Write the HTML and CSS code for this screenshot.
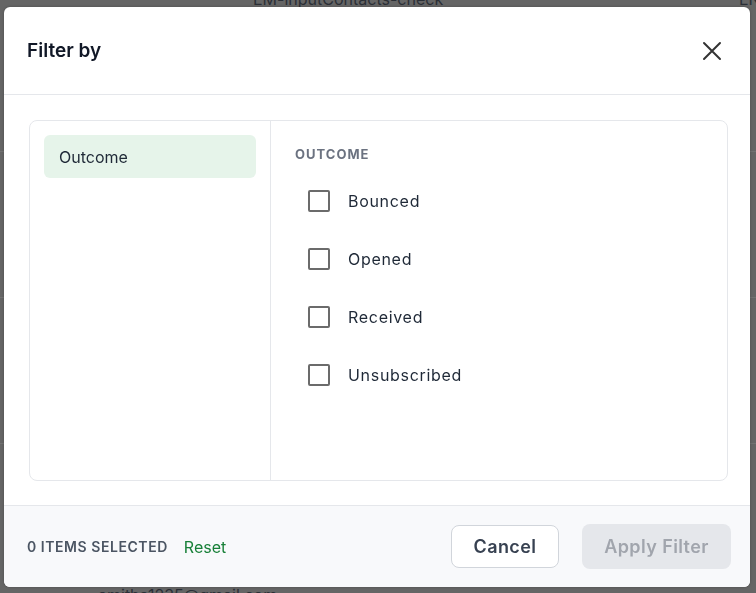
FILE: index.html
```html
<!DOCTYPE html>
<html lang="en">
<head>
    <meta charset="UTF-8">
    <meta name="viewport" content="width=device-width, initial-scale=1.0">
    <title>Filter by</title>
    <link rel="stylesheet" href="styles.css">
</head>
<body>

    <div class="page">
        <div class="page-top">
            <span class="page-title">EM-inputContacts-check</span>
            <span class="page-lang">EN</span>
        </div>
        <div class="page-rows">
            <div class="page-row"></div>
            <div class="page-row"></div>
            <div class="page-row"></div>
        </div>
        <div class="page-email">amitha1235@qmail.com</div>
    </div>

    <div class="modal">
        <header class="modal-header">
            <h1>Filter by</h1>
            <button class="close-btn" aria-label="Close">
                <svg width="24" height="24" viewBox="0 0 24 24">
                    <path d="M4 4 L20 20 M20 4 L4 20" stroke="#333" stroke-width="2" fill="none" stroke-linecap="round"/>
                </svg>
            </button>
        </header>

        <section class="modal-body">
            <div class="filter-panel">
                <div class="filter-groups">
                    <div class="group active">Outcome</div>
                </div>
                <div class="filter-options">
                    <div class="options-title">OUTCOME</div>
                    <label class="option"><span class="checkbox"></span>Bounced</label>
                    <label class="option"><span class="checkbox"></span>Opened</label>
                    <label class="option"><span class="checkbox"></span>Received</label>
                    <label class="option"><span class="checkbox"></span>Unsubscribed</label>
                </div>
            </div>
        </section>

        <footer class="modal-footer">
            <div class="selected">
                <span class="count">0 ITEMS SELECTED</span>
                <a class="reset" href="#">Reset</a>
            </div>
            <div class="actions">
                <button class="btn-cancel">Cancel</button>
                <button class="btn-apply" disabled>Apply Filter</button>
            </div>
        </footer>
    </div>

</body>
</html>
```

FILE: styles.css
```css
body {
    margin: 0;
    padding: 0;
    font-family: Inter, "Liberation Sans", Arial, sans-serif;
    background: #656565;
    overflow: hidden;
}

.page {
    height: 100vh;
    display: flex;
    flex-direction: column;
    justify-content: space-between;
    color: #2b2f36;
    font-size: 16px;
}

.page-top {
    display: flex;
    margin-top: -11px;
    padding: 0 0 0 253px;
}

.page-title {
    flex: 1;
}

.page-lang {
    width: 17px;
    overflow: hidden;
}

.page-rows {
    display: flex;
    flex-direction: column;
    gap: 145px;
}

.page-row {
    height: 1px;
    background: #727272;
}

.page-email {
    padding-left: 98px;
    margin-bottom: -12px;
}

.modal {
    position: fixed;
    left: 4px;
    top: 7px;
    width: 746px;
    height: 580px;
    background: white;
    border-radius: 6px;
    box-shadow: 0 0 3px rgba(0, 0, 0, 0.25);
    display: flex;
    flex-direction: column;
    overflow: hidden;
}

.modal-header {
    height: 87px;
    padding: 0 26px 0 23px;
    display: flex;
    justify-content: space-between;
    align-items: center;
    border-bottom: 1px solid #e5e7eb;
}

.modal-header h1 {
    margin: 0;
    font-size: 19px;
    font-weight: 600;
    color: #111827;
}

.close-btn {
    background: none;
    border: none;
    padding: 0;
    display: flex;
    cursor: pointer;
}

.modal-body {
    flex: 1;
    padding: 25px 22px 24px 25px;
    display: flex;
}

.filter-panel {
    flex: 1;
    display: flex;
    border: 1px solid #e5e7eb;
    border-radius: 8px;
}

.filter-groups {
    width: 212px;
    padding: 14px;
    border-right: 1px solid #e5e7eb;
}

.group {
    height: 43px;
    padding-left: 15px;
    display: flex;
    align-items: center;
    border-radius: 6px;
    font-size: 16px;
    color: #1f2937;
}

.group.active {
    background: #e6f4ea;
}

.filter-options {
    flex: 1;
    padding: 25px 24px;
}

.options-title {
    font-size: 13px;
    line-height: 16px;
    font-weight: 700;
    letter-spacing: 1px;
    color: #6b7280;
    margin-bottom: 10px;
}

.option {
    height: 58px;
    padding-left: 13px;
    display: flex;
    align-items: center;
    gap: 18px;
    font-size: 16px;
    letter-spacing: 0.7px;
    color: #1f2937;
}

.checkbox {
    width: 18px;
    height: 18px;
    border: 2px solid #6b6b6b;
    border-radius: 2px;
}

.modal-footer {
    height: 81px;
    background: #f8f9fb;
    border-top: 1px solid #e5e7eb;
    padding: 0 19px 0 23px;
    display: flex;
    justify-content: space-between;
    align-items: center;
}

.selected {
    display: flex;
    align-items: center;
    gap: 16px;
}

.count {
    font-size: 14px;
    font-weight: 600;
    letter-spacing: 0.55px;
    color: #4b5563;
}

.reset {
    font-size: 16px;
    color: #188038;
    text-decoration: none;
}

.actions {
    display: flex;
    align-items: center;
    gap: 23px;
}

.actions button {
    font-family: inherit;
    font-size: 18px;
    font-weight: 600;
    letter-spacing: 0.4px;
    border-radius: 8px;
    cursor: pointer;
}

.btn-cancel {
    width: 108px;
    height: 43px;
    background: white;
    border: 1px solid #d1d5db;
    color: #374151;
}

.btn-apply {
    width: 149px;
    height: 45px;
    background: #e5e7eb;
    border: none;
    color: #a1a5ad;
}
```
